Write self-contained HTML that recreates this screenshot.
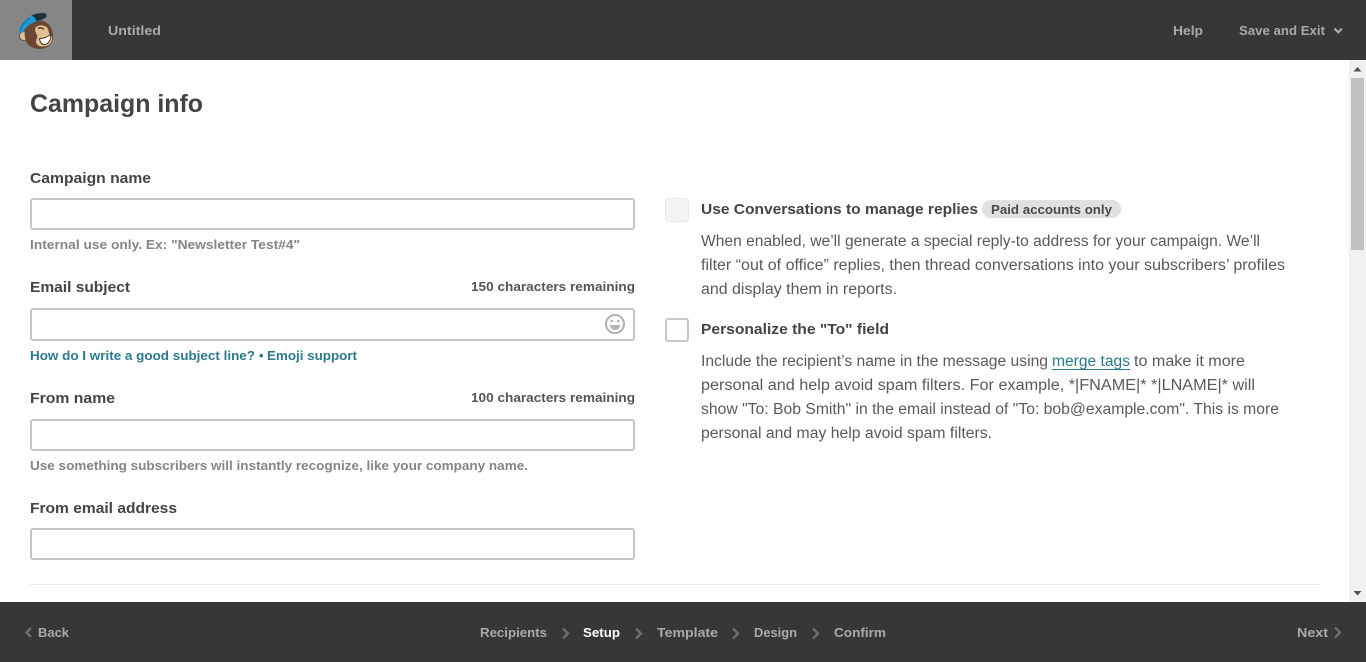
<!DOCTYPE html>
<html lang="en">
<head>
<meta charset="utf-8">
<title>Campaign info</title>
<style>
html,body{margin:0;padding:0;width:1366px;height:662px;overflow:hidden;background:#fff;font-family:"Liberation Sans",sans-serif}
.bar{position:absolute;left:0;width:1366px;height:60px;background:#373737}
.logo{position:absolute;left:0;top:0;width:72px;height:60px;background:#868686}
.input{position:absolute;left:30px;width:605px;box-sizing:border-box;background:#fff;border:2px solid #c6c6c6;border-radius:3px}
.cb{position:absolute;left:665px;width:24px;height:24px;box-sizing:border-box;border-radius:3px}
.sb{position:absolute;left:1349px;top:60px;width:17px;height:542px;background:#f1f1f1}
.thumb{position:absolute;left:1351px;top:78px;width:13px;height:172px;background:#c1c1c1}
.rule{position:absolute;left:30px;top:584px;width:1289px;border-top:1px dotted #d6d6d6}
.pill{position:absolute;left:982px;top:200px;width:139px;height:18px;border-radius:9px;background:#e0e0e0}
svg.t{position:absolute;left:0;top:0}
svg text{font-family:"Liberation Sans",sans-serif}
.b{font-weight:700;font-size:15px;fill:#444}
.s{font-weight:700;font-size:13px;fill:#858585}
.c{font-weight:700;font-size:13px;fill:#555}
.l{font-weight:700;font-size:13px;fill:#2a7a8c}
.p{font-size:15.5px;fill:#5a5a5a}
.n{font-weight:700;font-size:13px;fill:#a9a9a9}
.chev{fill:none;stroke:#6e6e6e;stroke-width:2.4}
</style>
</head>
<body>
<div class="bar" style="top:0"></div>
<div class="logo"></div>
<div class="bar" style="top:602px"></div>
<div class="sb"></div>
<div class="thumb"></div>
<div class="input" style="top:198px;height:32px"></div>
<div class="input" style="top:308px;height:33px"></div>
<div class="input" style="top:419px;height:32px"></div>
<div class="input" style="top:528px;height:32px"></div>
<div class="cb" style="top:198px;background:#f4f4f4;border:1px solid #e8e8e8"></div>
<div class="cb" style="top:318px;background:#fff;border:2px solid #c9c9c9"></div>
<div class="pill"></div>
<div class="rule"></div>

<svg class="t" width="1366" height="662" viewBox="0 0 1366 662" xmlns="http://www.w3.org/2000/svg">
  <!-- logo -->
  <g>
    <circle cx="24" cy="36" r="4.500" fill="#e5c095" stroke="#3a2a22" stroke-width="0.600"/>
    <path d="M26 24C31 19 41 18 47 23C52 27 54 34 52.500 40C50.500 46 45 49.500 38 49C31 48.500 26 44 25 38C24.500 32 24 28 26 24Z" fill="#6a4634"/>
    <path d="M36 27C39 24.500 45 25 47.500 28C49 31 48.500 33 50 34.500L52 37C52.500 42 49 46 44 46.500C40 47 36.500 45 36 42C36 39 38 38 37 35C35 32 34.500 29 36 27Z" fill="#e4bf94"/>
    <path d="M39.500 38.500C43 38.500 47.500 37 50.500 34.500C51.500 39.500 48.500 44.500 44 44.500C41.500 44.500 40 42 39.500 38.500Z" fill="#fbfaf2" stroke="#4a2f22" stroke-width="0.900"/>
    <path d="M38 28.500C40 27.500 42.500 27.500 44 29.500" fill="none" stroke="#6a4634" stroke-width="1.600"/>
    <path d="M19.500 32C19 26 25 18.500 33 15.500C38 14 43 13 46 13.500L46.500 16.500C44 20 40 20 35 22C29 24 25 27.500 23 32.500C21.500 33 20 33 19.500 32Z" fill="#1c9bd8"/>
    <path d="M31 15.500C36 13.500 42 12.500 46 13.500L46.500 16.500C44.500 19.500 40 20 36 21C36 18.500 34 16.500 31 15.500Z" fill="#22303c"/>
    <path d="M20 31C21 26 25 21 30 18" fill="none" stroke="#0f6fa3" stroke-width="1.200"/>
  </g>

  <!-- top nav -->
  <text x="108" y="35" class="n" textLength="53" lengthAdjust="spacingAndGlyphs">Untitled</text>
  <text x="1173" y="35" class="n" textLength="30" lengthAdjust="spacingAndGlyphs">Help</text>
  <text x="1239" y="35" class="n" textLength="86" lengthAdjust="spacingAndGlyphs">Save and Exit</text>
  <path d="M1334.500 28.500L1338.300 32.300L1342 28.500" fill="none" stroke="#a9a9a9" stroke-width="2.200"/>

  <!-- scrollbar arrows -->
  <path d="M1353.500 71.500L1357.500 67L1361.500 71.500Z" fill="#505050"/>
  <path d="M1353.500 591L1357.500 595.500L1361.500 591Z" fill="#505050"/>

  <!-- left form -->
  <text x="30" y="112" font-weight="700" font-size="25" fill="#444" textLength="173" lengthAdjust="spacingAndGlyphs">Campaign info</text>
  <text x="30" y="183" class="b" textLength="121" lengthAdjust="spacingAndGlyphs">Campaign name</text>
  <text x="30" y="249" class="s" textLength="270" lengthAdjust="spacingAndGlyphs">Internal use only. Ex: "Newsletter Test#4"</text>
  <text x="30" y="292" class="b" textLength="100" lengthAdjust="spacingAndGlyphs">Email subject</text>
  <text x="471" y="291" class="c" textLength="164" lengthAdjust="spacingAndGlyphs">150 characters remaining</text>
  <text x="30" y="360" class="l" textLength="225" lengthAdjust="spacingAndGlyphs">How do I write a good subject line?</text>
  <text x="259" y="360" class="l">•</text>
  <text x="267" y="360" class="l" textLength="90" lengthAdjust="spacingAndGlyphs">Emoji support</text>
  <text x="30" y="403" class="b" textLength="85" lengthAdjust="spacingAndGlyphs">From name</text>
  <text x="471" y="402" class="c" textLength="164" lengthAdjust="spacingAndGlyphs">100 characters remaining</text>
  <text x="30" y="470" class="s" textLength="498" lengthAdjust="spacingAndGlyphs">Use something subscribers will instantly recognize, like your company name.</text>
  <text x="30" y="513" class="b" textLength="147" lengthAdjust="spacingAndGlyphs">From email address</text>

  <!-- emoji icon -->
  <circle cx="615" cy="324" r="9" fill="none" stroke="#b2b2b2" stroke-width="2"/>
  <circle cx="611.700" cy="321" r="1.300" fill="#b2b2b2"/>
  <circle cx="618.300" cy="321" r="1.300" fill="#b2b2b2"/>
  <path d="M610 325H620C620 328 618 330 615 330C612 330 610 328 610 325Z" fill="#b2b2b2"/>

  <!-- right column -->
  <text x="701" y="214" class="b" textLength="277" lengthAdjust="spacingAndGlyphs">Use Conversations to manage replies</text>
  <text x="991" y="214" font-weight="700" font-size="13" fill="#4a4a4a" textLength="121" lengthAdjust="spacingAndGlyphs">Paid accounts only</text>
  <text x="701" y="246" class="p" textLength="559" lengthAdjust="spacingAndGlyphs">When enabled, we’ll generate a special reply-to address for your campaign. We’ll</text>
  <text x="701" y="270" class="p" textLength="584" lengthAdjust="spacingAndGlyphs">filter “out of office” replies, then thread conversations into your subscribers’ profiles</text>
  <text x="701" y="294" class="p" textLength="196" lengthAdjust="spacingAndGlyphs">and display them in reports.</text>
  <text x="701" y="334" class="b" textLength="188" lengthAdjust="spacingAndGlyphs">Personalize the "To" field</text>
  <text x="701" y="366" class="p" textLength="347" lengthAdjust="spacingAndGlyphs">Include the recipient’s name in the message using</text>
  <text x="1052" y="366" class="p" style="fill:#2a7a8c" textLength="78" lengthAdjust="spacingAndGlyphs">merge tags</text>
  <rect x="1052" y="369" width="78" height="1" fill="#2a7a8c"/>
  <text x="1134" y="366" class="p" textLength="111" lengthAdjust="spacingAndGlyphs">to make it more</text>
  <text x="701" y="390" class="p" textLength="554" lengthAdjust="spacingAndGlyphs">personal and help avoid spam filters. For example, *|FNAME|* *|LNAME|* will</text>
  <text x="701" y="414" class="p" textLength="578" lengthAdjust="spacingAndGlyphs">show "To: Bob Smith" in the email instead of "To: bob@example.com". This is more</text>
  <text x="701" y="438" class="p" textLength="291" lengthAdjust="spacingAndGlyphs">personal and may help avoid spam filters.</text>

  <!-- bottom nav -->
  <path class="chev" d="M31 628L26.500 632.500L31 637"/>
  <text x="38" y="637" class="n" textLength="31" lengthAdjust="spacingAndGlyphs">Back</text>
  <text x="480" y="637" class="n" textLength="67" lengthAdjust="spacingAndGlyphs">Recipients</text>
  <path class="chev" d="M563 628.500L568 633.500L563 638.500"/>
  <text x="583" y="637" font-weight="700" font-size="13" fill="#fff" textLength="37" lengthAdjust="spacingAndGlyphs">Setup</text>
  <path class="chev" d="M636 628.500L641 633.500L636 638.500"/>
  <text x="657" y="637" class="n" textLength="61" lengthAdjust="spacingAndGlyphs">Template</text>
  <path class="chev" d="M733 628.500L738 633.500L733 638.500"/>
  <text x="754" y="637" class="n" textLength="43" lengthAdjust="spacingAndGlyphs">Design</text>
  <path class="chev" d="M813 628.500L818 633.500L813 638.500"/>
  <text x="834" y="637" class="n" textLength="52" lengthAdjust="spacingAndGlyphs">Confirm</text>
  <text x="1297" y="637" class="n" textLength="31" lengthAdjust="spacingAndGlyphs">Next</text>
  <path class="chev" d="M1335 627.500L1340 632.500L1335 637.500"/>
</svg>
</body>
</html>
